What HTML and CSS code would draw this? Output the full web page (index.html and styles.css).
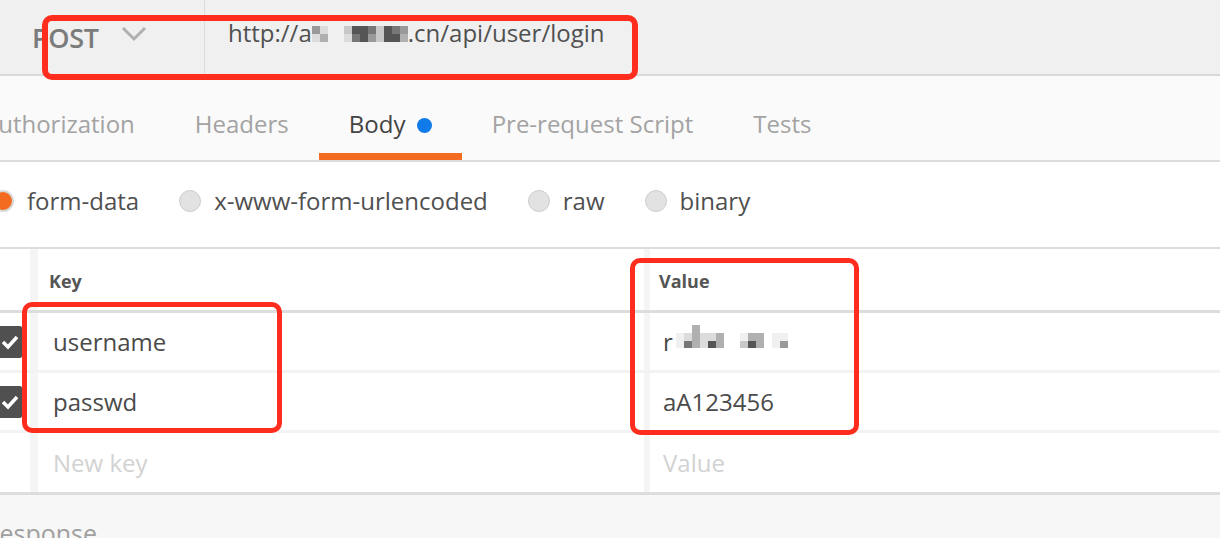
FILE: index.html
```html
<!DOCTYPE html>
<html>
<head>
	<meta charset="UTF-8">
	<title>POST login</title>
	<link rel="stylesheet" href="styles.css">
</head>
<body>
	<div class="page">
		<div class="top">
			<div class="method">
				<span class="method-name">POST</span>
				<svg class="chevron" width="26" height="16" viewBox="0 0 26 16"><path d="M2 2 L13 13 L24 2" fill="none" stroke="#b0b0b0" stroke-width="3"/></svg>
			</div>
			<div class="url">http://a<span class="mosaic url-mosaic">
				<i class="g5"></i><i class="g2"></i><i></i><i></i><i class="g3"></i><i class="g7"></i><i class="g7"></i><i class="g6"></i><i class="g3"></i><i class="g7"></i><i class="g6"></i><i class="g5"></i>
				<i class="g2"></i><i class="g4"></i><i></i><i></i><i class="g2"></i><i class="g6"></i><i class="g7"></i><i class="g5"></i><i class="g3"></i><i class="g7"></i><i class="g7"></i><i class="g4"></i>
			</span>.cn/api/user/login</div>
		</div>

		<div class="tabs">
			<div class="tab">Authorization</div>
			<div class="tab">Headers</div>
			<div class="tab active">Body <span class="dot"></span></div>
			<div class="tab">Pre-request Script</div>
			<div class="tab">Tests</div>
		</div>

		<div class="body-types">
			<label class="opt"><span class="radio checked"></span>form-data</label>
			<label class="opt"><span class="radio"></span>x-www-form-urlencoded</label>
			<label class="opt"><span class="radio"></span>raw</label>
			<label class="opt"><span class="radio"></span>binary</label>
		</div>

		<div class="params">
			<div class="row head">
				<div class="cell check"></div>
				<div class="cell key">Key</div>
				<div class="cell value">Value</div>
			</div>
			<div class="row">
				<div class="cell check"><span class="box"><svg width="32" height="32" viewBox="0 0 32 32"><path d="M13 16 L18 21 L27 11" fill="none" stroke="#fff" stroke-width="3.5"/></svg></span></div>
				<div class="cell key">username</div>
				<div class="cell value">r<span class="mosaic val-mosaic">
					<i></i><i></i><i class="g4"></i><i></i><i></i><i></i><i></i><i></i><i></i><i></i><i></i><i></i><i></i><i></i>
					<i class="g1"></i><i class="g2"></i><i class="g4"></i><i class="g2"></i><i class="g2"></i><i class="g4"></i><i></i><i></i><i class="g1"></i><i class="g4"></i><i class="g4"></i><i></i><i class="g1"></i><i class="g1"></i>
					<i class="g1"></i><i class="g6"></i><i class="g4"></i><i class="g2"></i><i class="g7"></i><i class="g4"></i><i></i><i></i><i class="g3"></i><i class="g7"></i><i class="g4"></i><i></i><i class="g1"></i><i class="g5"></i>
				</span></div>
			</div>
			<div class="row">
				<div class="cell check"><span class="box"><svg width="32" height="32" viewBox="0 0 32 32"><path d="M13 16 L18 21 L27 11" fill="none" stroke="#fff" stroke-width="3.5"/></svg></span></div>
				<div class="cell key">passwd</div>
				<div class="cell value">aA123456</div>
			</div>
			<div class="row last">
				<div class="cell check"></div>
				<div class="cell key placeholder">New key</div>
				<div class="cell value placeholder">Value</div>
			</div>
		</div>

		<div class="response">Response</div>

		<div class="mark mark-url"></div>
		<div class="mark mark-key"></div>
		<div class="mark mark-value"></div>
	</div>
</body>
</html>
```

FILE: styles.css
```css
* {
	margin: 0;
	padding: 0;
	box-sizing: border-box;
}

body {
	width: 1220px;
	height: 538px;
	overflow: hidden;
	background: #fff;
	font-family: "Open Sans", "Liberation Sans", sans-serif;
	font-size: 24px;
	color: #4a4a4a;
}

.page {
	position: relative;
	height: 538px;
	overflow: hidden;
}

/* request bar */
.top {
	display: flex;
	height: 76px;
	background: #f0f0f0;
	border-bottom: 2px solid #d9d9d9;
}

.top .method {
	display: flex;
	align-items: center;
	width: 205px;
	padding-left: 32px;
	border-right: 1px solid #dcdcdc;
}

.method-name {
	font-size: 27px;
	font-weight: 600;
	color: #7b7b7b;
	letter-spacing: -0.3px;
}

.chevron {
	margin-left: 22px;
	margin-top: -6px;
}

.top .url {
	padding: 17px 0 0 23px;
	color: #505050;
	line-height: 32px;
	white-space: nowrap;
}

.mosaic {
	display: inline-grid;
	vertical-align: middle;
}

.mosaic i {
	display: block;
}

.url-mosaic {
	grid-template-columns: repeat(12, 8px);
	grid-template-rows: 8px 8px;
	margin: -4px 0 0 0;
}

.val-mosaic {
	grid-template-columns: repeat(14, 8px);
	grid-template-rows: 8px 8px 7px;
	margin: -10px 0 0 3px;
}

.g1 { background: #f0f0f0; }
.g2 { background: #dcdcdc; }
.g3 { background: #c8c8c8; }
.g4 { background: #b0b0b0; }
.g5 { background: #999; }
.g6 { background: #777; }
.g7 { background: #555; }

/* tabs */
.tabs {
	display: flex;
	height: 86px;
	margin-left: -47px;
	background: #fafafa;
	border-bottom: 2px solid #dcdcdc;
}

.tab {
	padding: 30px 30px 0;
	line-height: 36px;
	color: #a3a3a3;
	border-bottom: 7px solid transparent;
	white-space: nowrap;
}

.tab.active {
	color: #444;
	border-bottom-color: #f26b21;
}

.dot {
	display: inline-block;
	width: 15px;
	height: 15px;
	margin-left: 5px;
	border-radius: 50%;
	background: #0f7ae8;
}

/* body types */
.body-types {
	display: flex;
	align-items: center;
	gap: 40px;
	height: 87px;
	margin-left: -8px;
	border-bottom: 2px solid #dddddd;
	color: #505050;
	padding-bottom: 8px;
}

.opt {
	display: flex;
	align-items: center;
	gap: 13px;
}

.radio {
	display: inline-block;
	width: 22px;
	height: 22px;
	border-radius: 50%;
	background: #e2e2e2;
	border: 1px solid #cdcdcd;
}

.radio.checked {
	background: #f26b21;
	border: 2px solid #d8d8d8;
}

/* params table */
.row {
	display: grid;
	grid-template-columns: 30px 614px 1fr;
	height: 60px;
	border-bottom: 3px solid #f3f3f3;
	align-items: center;
}

.row.head {
	height: 64px;
	border-bottom-color: #dddddd;
	font-size: 18px;
	font-weight: 700;
	color: #555;
}

.row.last {
	height: 62px;
	border-bottom-color: #dddddd;
}

.cell {
	height: 100%;
	display: flex;
	align-items: center;
	white-space: nowrap;
}

.cell.key {
	border-left: 8px solid #f5f5f5;
	padding-left: 15px;
}

.cell.value {
	border-left: 6px solid #f5f5f5;
	padding-left: 13px;
}

.head .cell.key {
	padding-left: 11px;
	padding-top: 2px;
}

.head .cell.value {
	padding-left: 9px;
	padding-top: 2px;
}

.cell.placeholder {
	color: #d2d2d2;
}

.box {
	display: block;
	width: 32px;
	height: 32px;
	margin-left: -10px;
	background: #505050;
	border-radius: 2px;
}

.box svg {
	display: block;
}

/* response */
.response {
	height: 60px;
	margin-left: -16px;
	padding-top: 21px;
	background: #f7f7f7;
	color: #a0a0a0;
	font-size: 25px;
}

/* red annotation boxes */
.mark {
	position: absolute;
	border: 6px solid #ff2d1e;
	border-radius: 10px;
}

.mark-url {
	left: 42px;
	top: 15px;
	width: 596px;
	height: 65px;
}

.mark-key {
	left: 22px;
	top: 302px;
	width: 260px;
	height: 131px;
	border-width: 5px;
}

.mark-value {
	left: 630px;
	top: 258px;
	width: 229px;
	height: 177px;
	border-width: 5px;
}
```
